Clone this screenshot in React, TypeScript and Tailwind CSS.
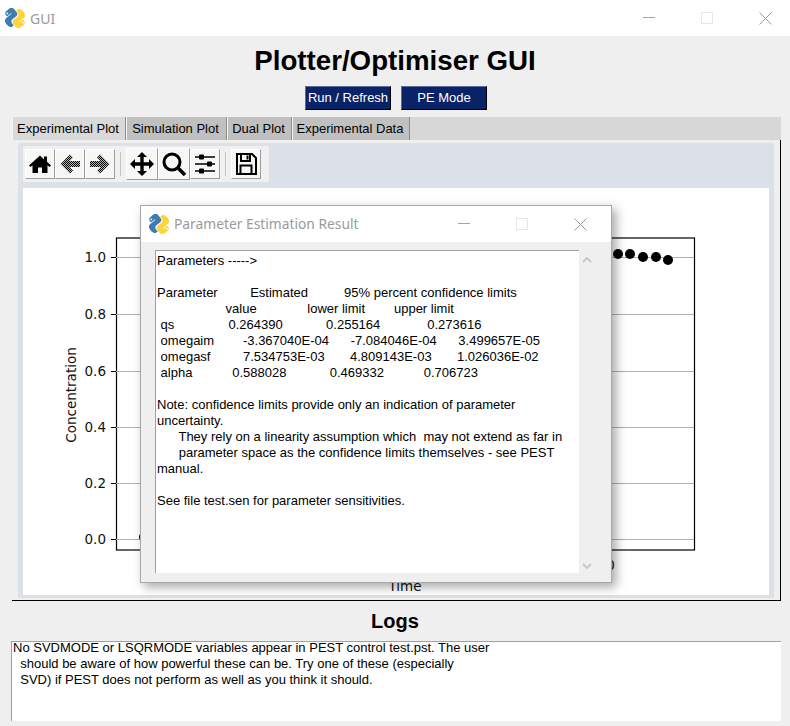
import React from 'react';

const arial = { fontFamily: '"Liberation Sans", Arial, sans-serif' };

const resultLines = [
  'Parameters ----->',
  '',
  'Parameter         Estimated          95% percent confidence limits',
  '                   value              lower limit        upper limit',
  ' qs               0.264390            0.255164             0.273616',
  ' omegaim        -3.367040E-04      -7.084046E-04      3.499657E-05',
  ' omegasf         7.534753E-03       4.809143E-03       1.026036E-02',
  ' alpha           0.588028            0.469332           0.706723',
  '',
  'Note: confidence limits provide only an indication of parameter',
  'uncertainty.',
  '      They rely on a linearity assumption which  may not extend as far in',
  '      parameter space as the confidence limits themselves - see PEST',
  'manual.',
  '',
  'See file test.sen for parameter sensitivities.',
];

const logLines = [
  'No SVDMODE or LSQRMODE variables appear in PEST control test.pst. The user',
  '  should be aware of how powerful these can be. Try one of these (especially',
  '  SVD) if PEST does not perform as well as you think it should.',
];

const tabs = [
  { label: 'Experimental Plot', width: 'w-[114px]', active: true },
  { label: 'Simulation Plot', width: 'w-[101px]', active: false },
  { label: 'Dual Plot', width: 'w-[65px]', active: false },
  { label: 'Experimental Data', width: 'w-[118px]', active: false },
];

const yTicks = [
  { label: '1.0', y: 257 },
  { label: '0.8', y: 314 },
  { label: '0.6', y: 371 },
  { label: '0.4', y: 427 },
  { label: '0.2', y: 483 },
  { label: '0.0', y: 539 },
];

const dots = [
  [144, 537], [618, 254], [630, 254], [643, 257], [656, 257], [668, 260],
];

function PythonIcon() {
  return (
    <svg width="20" height="20" viewBox="2 2 20 20" className="shrink-0">
      <g transform="rotate(-40 12 12)">
        <path
          fill="#3f7cb0"
          fillRule="evenodd"
          d="M11.9 1C6.6 1 6.9 3.3 6.9 3.3v2.4H12v.8H4.9S1.5 6.1 1.5 11.6s3 5.3 3 5.3h1.800v-2.500s-.1-3 2.900-3h5s2.800 0 2.800-2.700V3.900S17.400 1 11.900 1zM9.100 2.600a.9.9 0 1 1 0 1.800.9.9 0 0 1 0-1.800z"
        />
        <path
          fill="#ffd43b"
          fillRule="evenodd"
          d="M12.100 23c5.300 0 5-2.300 5-2.300v-2.400H12v-.8h7.100s3.400.4 3.400-5.100-3-5.300-3-5.300h-1.800v2.500s.1 3-2.900 3h-5s-2.800 0-2.800 2.700v4.800S6.600 23 12.100 23zm2.800-1.600a.9.9 0 1 1 0-1.800.9.9 0 0 1 0 1.800z"
        />
      </g>
    </svg>
  );
}

function WindowControls() {
  return (
    <div className="flex items-center gap-[46px]">
      <svg width="12" height="12" viewBox="0 0 12 12">
        <path d="M0 5.500h12" stroke="#a3a3a3" strokeWidth="1" />
      </svg>
      <svg width="12" height="12" viewBox="0 0 12 12">
        <rect x="0.5" y="0.5" width="11" height="11" fill="none" stroke="#e6e6e6" />
      </svg>
      <svg width="13" height="13" viewBox="0 0 13 13">
        <path d="M0.5 0.500l12 12M12.500 0.500l-12 12" stroke="#9a9a9a" strokeWidth="1" fill="none" />
      </svg>
    </div>
  );
}

function ToolButton({ children, raised }: { children: React.ReactNode; raised?: boolean }) {
  return (
    <div
      className={`flex items-center justify-center bg-[#f7f7f7] border-r border-b border-[#9c9c9c] border-t border-l border-t-white border-l-white ${
        raised ? 'w-[32px] h-[32px]' : 'w-[30px] h-[30px]'
      }`}
    >
      {children}
    </div>
  );
}

function Toolbar() {
  return (
    <div className="flex items-center w-[246px] h-[36px] bg-[#f0f0f0] pl-[2px]">
      <ToolButton>
        <svg width="24" height="24" viewBox="0 0 24 24">
          <path d="M12 3.500L1 13.500l1.500 1.500L4.500 13.200V21h5.500v-5.500h4V21h5.500v-7.800l2 1.800 1.500-1.500-4-3.700V4.500h-3v3z" fill="#000" />
        </svg>
      </ToolButton>
      <ToolButton>
        <svg width="24" height="24" viewBox="0 0 24 24">
          <defs>
            <pattern id="dither" width="2" height="2" patternUnits="userSpaceOnUse">
              <rect width="1" height="1" fill="#000" />
              <rect x="1" y="1" width="1" height="1" fill="#000" />
              <rect x="1" width="1" height="1" fill="#b4b4b4" />
              <rect y="1" width="1" height="1" fill="#b4b4b4" />
            </pattern>
          </defs>
          <path d="M12 2.500L2.500 12l9.500 9.500 3-3-3.500-3.500H22V9h-10.500L15 5.500z" fill="url(#dither)" />
        </svg>
      </ToolButton>
      <ToolButton>
        <svg width="24" height="24" viewBox="0 0 24 24">
          <path d="M12 2.500l9.500 9.500-9.500 9.500-3-3 3.500-3.500H2V9h10.500L9 5.500z" fill="url(#dither)" />
        </svg>
      </ToolButton>
      <div className="w-[1px] h-[24px] bg-[#c4c4c4] ml-[5px] mr-[5px]" />
      <ToolButton raised>
        <svg width="26" height="26" viewBox="0 0 26 26">
          <path d="M13 1l5 5h-3.300v5.300H20V8l5 5-5 5v-3.300h-5.300V20H18l-5 5-5-5h3.300v-5.300H6V18l-5-5 5-5v3.300h5.300V6H8z" fill="#000" />
        </svg>
      </ToolButton>
      <ToolButton raised>
        <svg width="26" height="26" viewBox="0 0 26 26">
          <circle cx="11" cy="11" r="8" fill="none" stroke="#000" strokeWidth="3" />
          <path d="M17 17l7 7" stroke="#000" strokeWidth="3.500" />
        </svg>
      </ToolButton>
      <ToolButton>
        <svg width="24" height="24" viewBox="0 0 24 24">
          <path d="M2 5h20M2 12h20M2 19h20" stroke="#000" strokeWidth="1.500" />
          <rect x="6" y="2.500" width="5" height="5" rx="1" fill="#000" />
          <rect x="14" y="9.500" width="5" height="5" rx="1" fill="#000" />
          <rect x="6" y="16.500" width="5" height="5" rx="1" fill="#000" />
        </svg>
      </ToolButton>
      <div className="w-[1px] h-[24px] bg-[#c4c4c4] ml-[5px] mr-[5px]" />
      <ToolButton>
        <svg width="24" height="24" viewBox="0 0 24 24">
          <path d="M3 2h15l4 4v16H3z" fill="none" stroke="#000" strokeWidth="2" />
          <path d="M7 3v6h9V3" fill="none" stroke="#000" strokeWidth="2" />
          <path d="M6.500 21v-7.500h11V21" fill="none" stroke="#000" strokeWidth="2" />
          <rect x="12.500" y="3.500" width="2" height="4" fill="#000" />
        </svg>
      </ToolButton>
    </div>
  );
}

function Chart() {
  const labelFont = '"DejaVu Sans", sans-serif';
  return (
    <svg width="746" height="407" viewBox="23 188 746 407" className="block">
      <rect x="116.500" y="238" width="578" height="312" fill="#fff" stroke="#000" strokeWidth="1.200" />
      {yTicks.map((t) => (
        <g key={t.label}>
          <path d={`M116 ${t.y + 0.5}H694`} stroke="#b0b0b0" strokeWidth="1" />
          <path d={`M111 ${t.y + 0.5}H116`} stroke="#000" strokeWidth="1" />
          <text x="106" y={t.y + 5} textAnchor="end" fontSize="13.500" fill="#111" fontFamily={labelFont}>
            {t.label}
          </text>
        </g>
      ))}
      {dots.map(([cx, cy]) => (
        <circle key={cx} cx={cx} cy={cy} r="5" fill="#000" />
      ))}
      <text
        transform="translate(76 395) rotate(-90)"
        textAnchor="middle"
        fontSize="13.500"
        fill="#111"
        fontFamily={labelFont}
      >
        Concentration
      </text>
      <text x="405" y="591" textAnchor="middle" fontSize="13.500" fill="#111" fontFamily={labelFont}>
        Time
      </text>
      <text x="602" y="570" textAnchor="middle" fontSize="13.500" fill="#111" fontFamily={labelFont}>
        100
      </text>
    </svg>
  );
}

function ResultDialog() {
  return (
    <div className="absolute left-[140px] top-[205px] w-[472px] h-[378px] flex flex-col border border-[#a8a8a8] bg-[#efefef] shadow-[4px_4px_10px_rgba(0,0,0,0.35)]">
      <div className="h-[36px] shrink-0 bg-white flex items-center justify-between pl-[8px] pr-[24px]">
        <div className="flex items-center gap-[5px]">
          <PythonIcon />
          <span className="text-[13.800px] text-[#9a9a9a]" style={{ fontFamily: '"Noto Sans", sans-serif' }}>
            Parameter Estimation Result
          </span>
        </div>
        <WindowControls />
      </div>
      <div className="flex flex-1 pl-[14px] pt-[8px] pb-[8px]">
        <div className="w-[424px] h-[323px] bg-white border-t border-l border-[#a0a0a0] pl-[1px] pt-[2px] overflow-hidden">
          <pre className="text-[13px] leading-[16px] text-black" style={arial}>
            {resultLines.join('\n')}
          </pre>
        </div>
        <div className="flex flex-col items-center justify-between w-[16px] pt-[7px] pb-[5px]">
          <svg width="10" height="6" viewBox="0 0 10 6">
            <path d="M1 5l4-4 4 4" fill="none" stroke="#c6c6c6" strokeWidth="1.800" />
          </svg>
          <svg width="10" height="6" viewBox="0 0 10 6">
            <path d="M1 1l4 4 4-4" fill="none" stroke="#c6c6c6" strokeWidth="1.800" />
          </svg>
        </div>
      </div>
    </div>
  );
}

export default function App() {
  return (
    <div className="relative w-[790px] h-[726px] overflow-hidden bg-[#efefef] flex flex-col" style={arial}>
      {/* Window title bar */}
      <div className="h-[36px] shrink-0 bg-white flex items-center justify-between pl-[5px] pr-[18px]">
        <div className="flex items-center gap-[5px]">
          <PythonIcon />
          <span className="text-[14px] text-[#9a9a9a]" style={{ fontFamily: '"Noto Sans", sans-serif' }}>
            GUI
          </span>
        </div>
        <WindowControls />
      </div>

      <h1 className="h-[50px] shrink-0 flex items-center justify-center text-[27.700px] font-bold text-black">
        Plotter/Optimiser GUI
      </h1>

      <div className="h-[24px] shrink-0 flex justify-center gap-[10px] pl-[2px] text-[13px] text-white">
        <button className="w-[86px] bg-[#0a2366] border border-[#5a6c9c] border-r-black border-b-black">
          Run / Refresh
        </button>
        <button className="w-[86px] bg-[#0a2366] border border-[#5a6c9c] border-r-black border-b-black">
          PE Mode
        </button>
      </div>

      {/* Notebook */}
      <div className="mt-[7px] ml-[12px] w-[769px] shrink-0">
        <div className="h-[23px] bg-[#d7d7d7] flex items-stretch">
          {tabs.map((tab) => (
            <div
              key={tab.label}
              className={`${tab.width} flex items-center justify-center pr-[2px] text-[13px] text-black border-r border-[#8c8c8c] border-l border-l-[#f4f4f4] ${
                tab.active ? 'bg-[#d9d9d9]' : 'bg-[#c0c0c0]'
              }`}
            >
              {tab.label}
            </div>
          ))}
        </div>
        <div className="h-[461px] border-r border-b border-black pl-[6px] pt-[3px] pr-[6px]">
          <div className="w-[756px] h-[455px] bg-[#dce0e8] pl-[5px] pt-[3px]">
            <Toolbar />
            <div className="mt-[6px] w-[746px] h-[407px] bg-white">
              <Chart />
            </div>
          </div>
        </div>
      </div>

      <h2 className="h-[40px] shrink-0 flex items-center justify-center text-[20px] font-bold text-black">Logs</h2>

      <div className="ml-[11px] w-[770px] h-[80px] shrink-0 bg-white border-t border-l border-[#a0a0a0] pl-[1px] overflow-hidden">
        <pre className="-mt-[2px] text-[13px] leading-[16px] text-black" style={arial}>
          {logLines.join('\n')}
        </pre>
      </div>

      <ResultDialog />
    </div>
  );
}
